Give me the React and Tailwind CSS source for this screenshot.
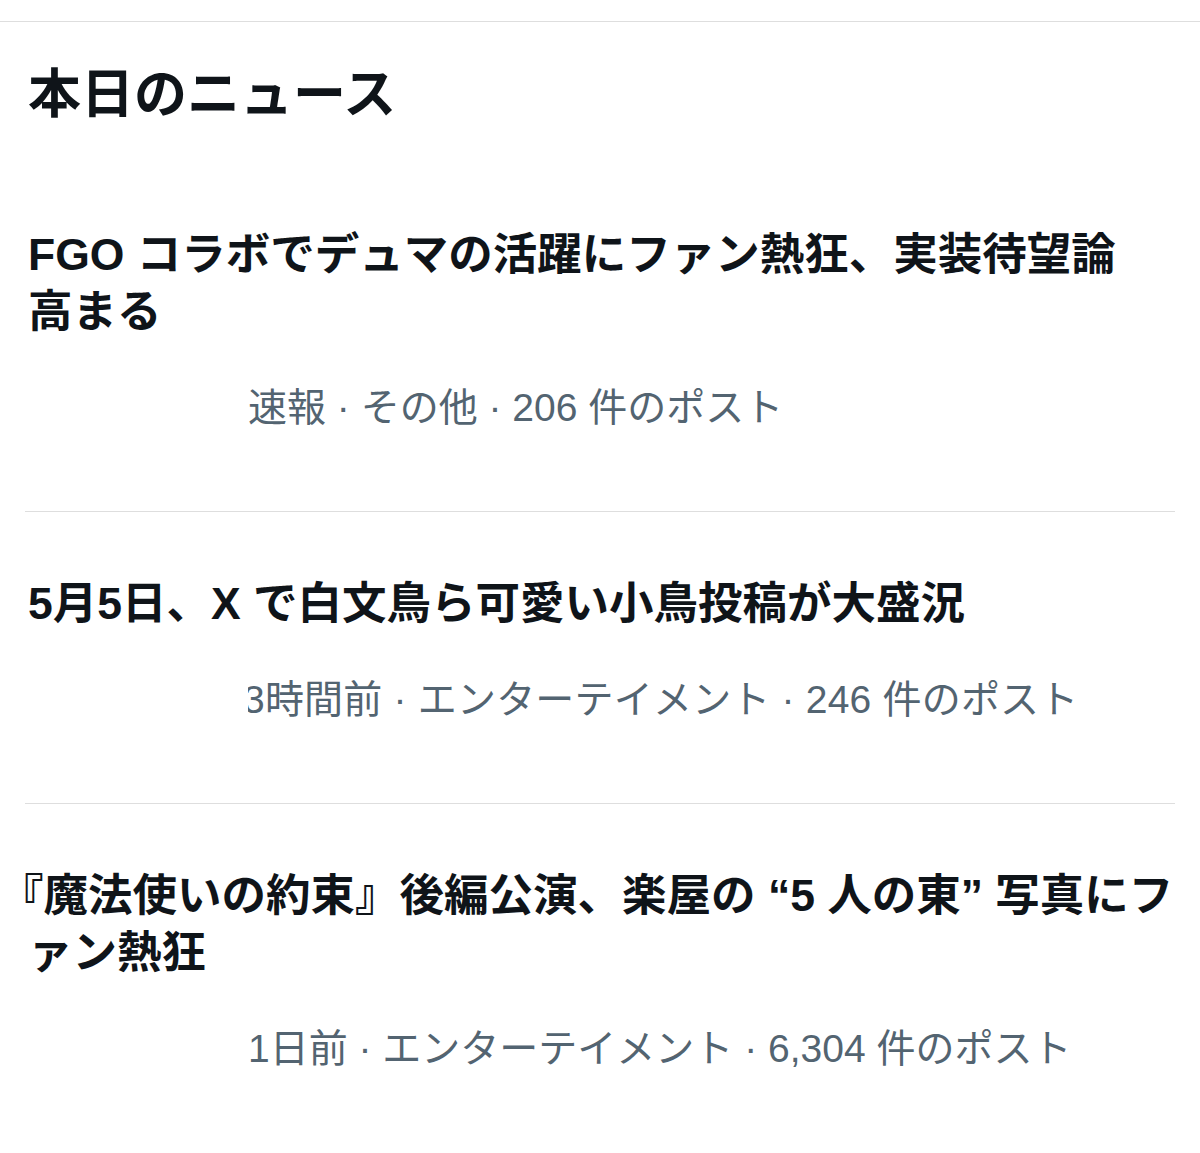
import React from "react"

const font = { fontFamily: '"Liberation Sans", "Noto Sans CJK JP", sans-serif' }

const news = [
  {
    lines: ["FGO コラボでデュマの活躍にファン熱狂、実装待望論", "高まる"],
    meta: "速報 · その他 · 206 件のポスト",
  },
  {
    lines: ["5月5日、X で白文鳥ら可愛い小鳥投稿が大盛況"],
    meta: "3時間前 · エンターテイメント · 246 件のポスト",
    clipped: true,
  },
  {
    lines: ["『魔法使いの約束』後編公演、楽屋の “5 人の東” 写真にフ", "ァン熱狂"],
    meta: "1日前 · エンターテイメント · 6,304 件のポスト",
    bracket: true,
  },
]

const NewsItem = ({ item, last }) => {
  return (
    <div className={`pt-[63px] pb-[78px] ${last ? "" : "border-b border-[#dedede]"}`}>
      <div className="text-[44.5px] leading-[57px] font-bold text-[#0f1419] pl-[3px]">
        {item.lines.map((line, i) => (
          <div key={i} className="whitespace-nowrap">
            {item.bracket && i === 0 ? (
              <>
                <span className="inline-block -ml-[29px]">『</span>
                {line.slice(1)}
              </>
            ) : (
              line
            )}
          </div>
        ))}
      </div>
      <div className="mt-[43px] pl-[223px] text-[39px] leading-[50px] text-[#536471] whitespace-nowrap">
        {item.clipped ? (
          <span className="inline-block overflow-hidden align-top">
            <span className="inline-block -ml-[5px] tracking-[0.2px]">{item.meta}</span>
          </span>
        ) : (
          item.meta
        )}
      </div>
    </div>
  )
}

export default function App() {
  return (
    <div className="w-[1200px] h-[1153px] bg-white overflow-hidden" style={font}>
      <div className="pt-[21px]">
        <div className="border-t border-[#dedede]" />
      </div>
      <div className="mx-[25px]">
        <h1 className="mt-[43px] text-[53px] leading-[60px] font-bold text-[#0f1419] pl-[3px]">
          本日のニュース
        </h1>
        <div className="mt-[38px]">
          {news.map((item, i) => (
            <NewsItem key={i} item={item} last={i === news.length - 1} />
          ))}
        </div>
      </div>
    </div>
  )
}
